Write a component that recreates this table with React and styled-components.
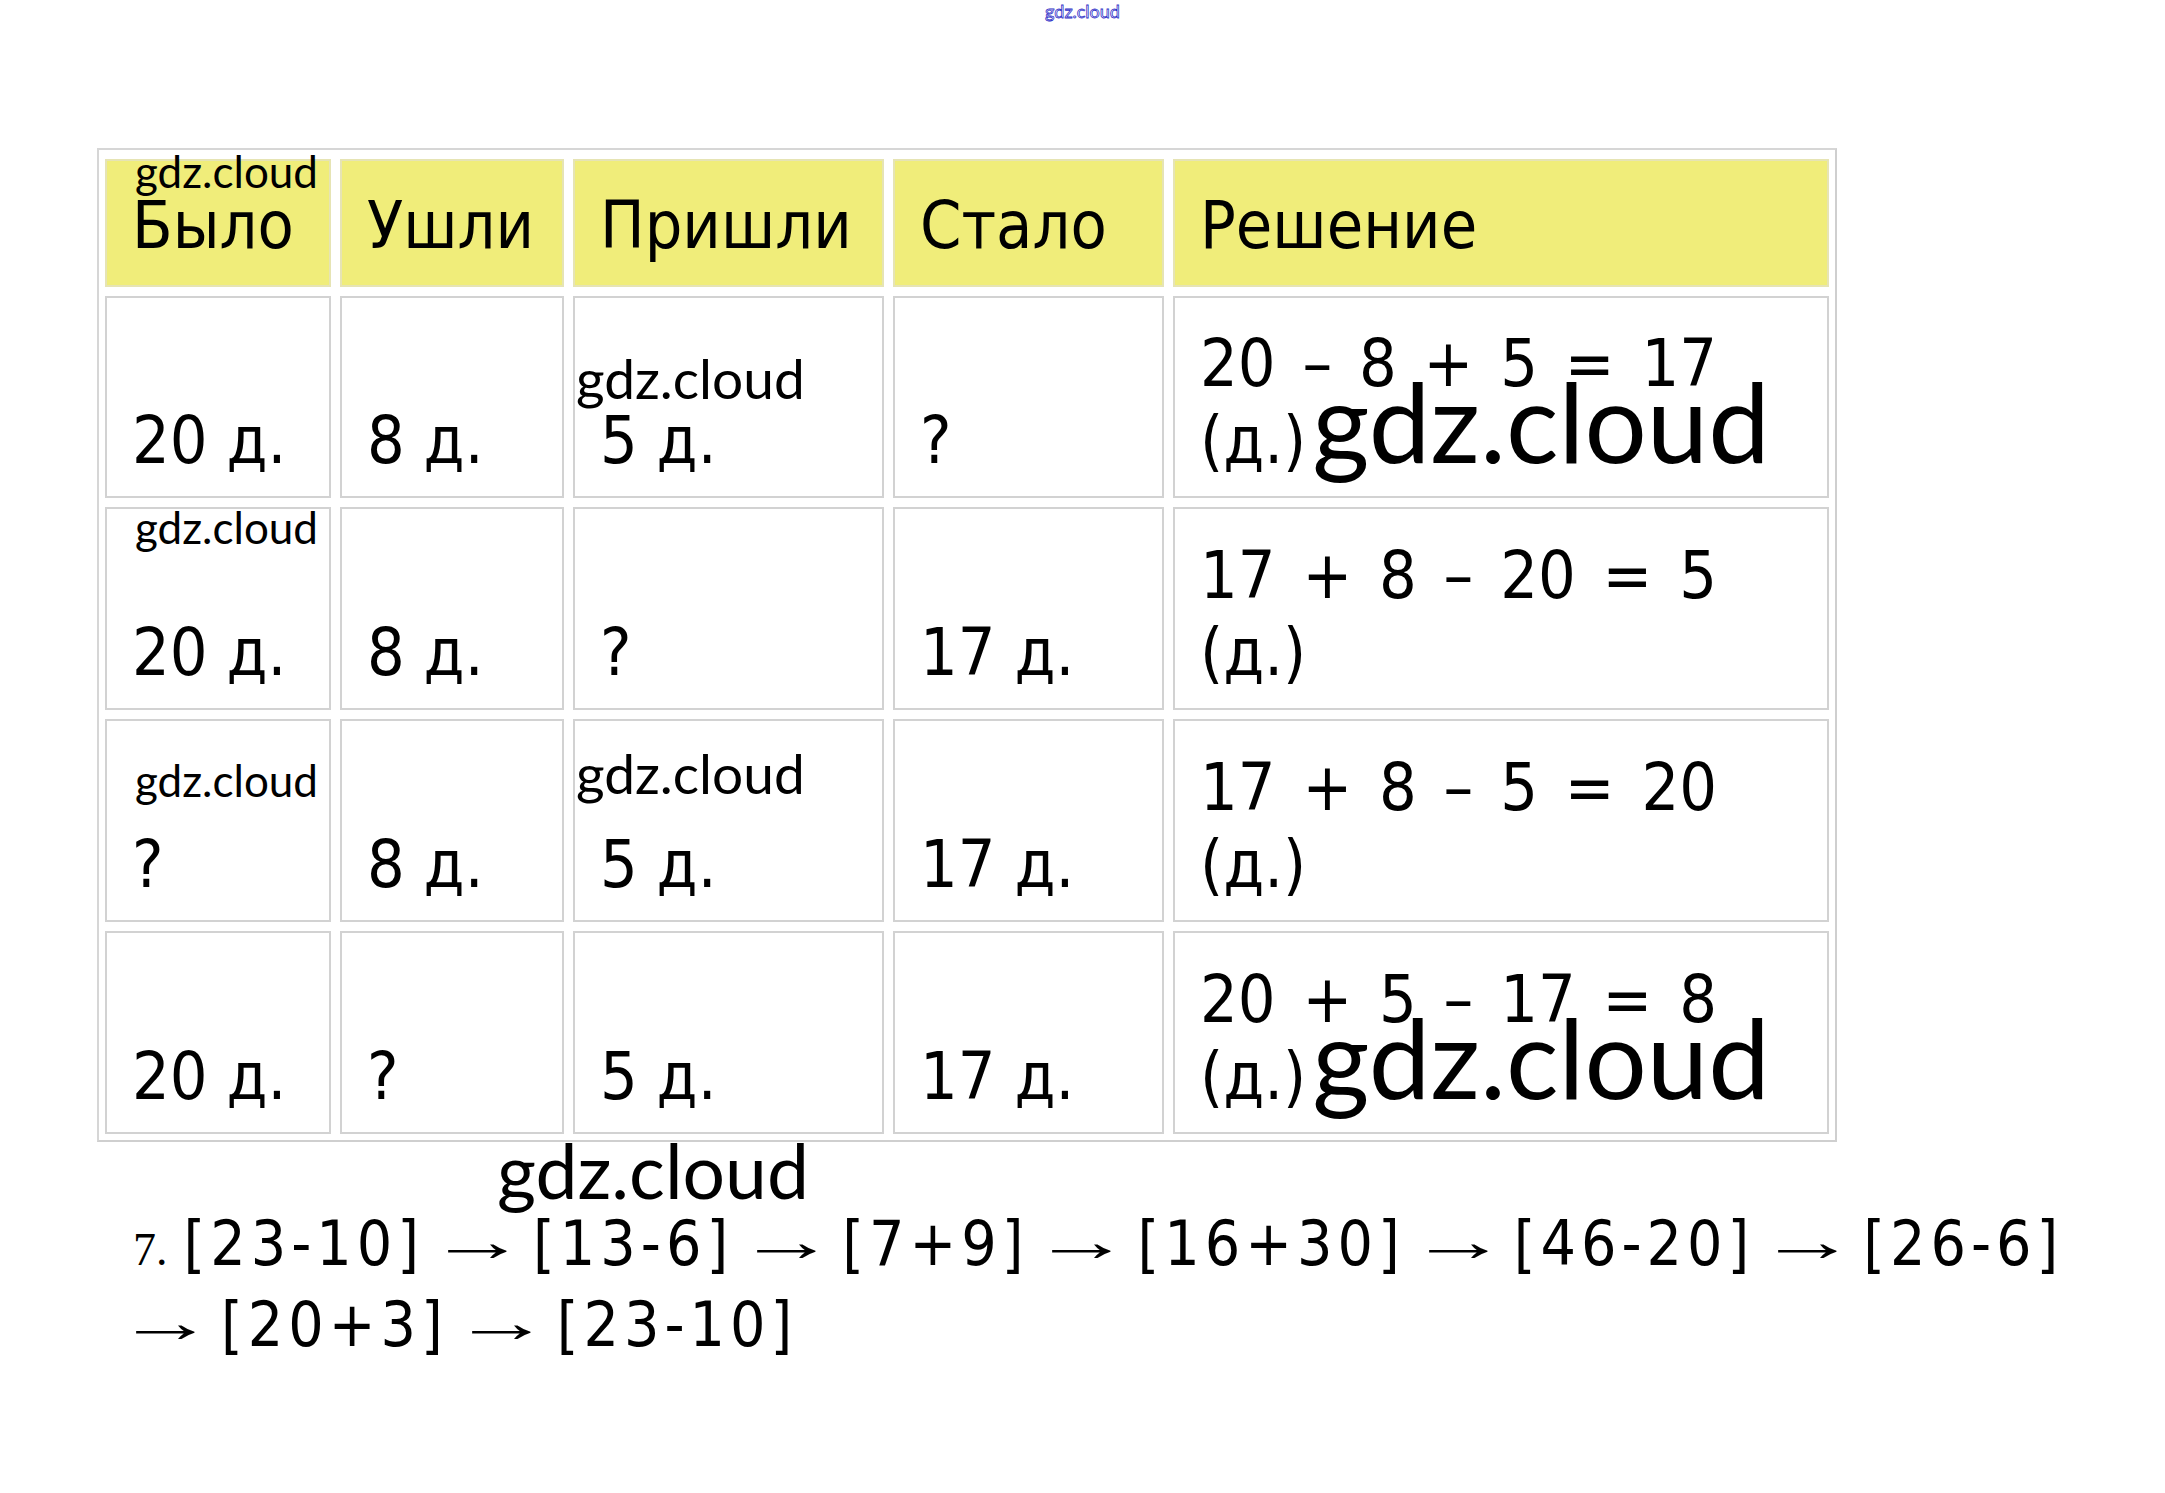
import React from "react";
import styled, { createGlobalStyle } from "styled-components";

const GlobalStyle = createGlobalStyle`
  html, body {
    margin: 0;
    padding: 0;
    background: #ffffff;
  }
  body {
    font-family: "DejaVu Sans Condensed", "DejaVu Sans", sans-serif;
    color: #000;
  }
`;

const headers = ["Было", "Ушли", "Пришли", "Стало", "Решение"];

// mark: small watermark placed over a cell { size, top, left }
const rows = [
  {
    cells: [
      { text: "20 д." },
      { text: "8 д." },
      { text: "5 д.", mark: { size: 55, top: 53, left: 1 } },
      { text: "?" },
    ],
    formula: "20 – 8 + 5 = 17",
    bigMark: true,
  },
  {
    cells: [
      { text: "20 д.", mark: { size: 44, top: -4, left: 28 } },
      { text: "8 д." },
      { text: "?" },
      { text: "17 д." },
    ],
    formula: "17 + 8 – 20 = 5",
  },
  {
    cells: [
      { text: "?", mark: { size: 44, top: 37, left: 28 } },
      { text: "8 д." },
      { text: "5 д.", mark: { size: 55, top: 25, left: 1 } },
      { text: "17 д." },
    ],
    formula: "17 + 8 – 5 = 20",
  },
  {
    cells: [
      { text: "20 д." },
      { text: "?" },
      { text: "5 д." },
      { text: "17 д." },
    ],
    formula: "20 + 5 – 17 = 8",
    bigMark: true,
  },
];

const chain = ["[23-10]", "[13-6]", "[7+9]", "[16+30]", "[46-20]", "[26-6]"];
const chainTail = ["[20+3]", "[23-10]"];

export default function App() {
  return (
    <>
      <GlobalStyle />
      <Page>
        <TopMark>gdz.cloud</TopMark>
        <Table>
          {headers.map((h, i) => (
            <Cell key={h} $head>
              {i === 0 && <Mark $size={44} $top={-12} $left={28}>gdz.cloud</Mark>}
              <CellText>{h}</CellText>
            </Cell>
          ))}
          {rows.map((row, r) => (
            <React.Fragment key={r}>
              {row.cells.map((c, i) => (
                <Cell key={i}>
                  {c.mark && (
                    <Mark $size={c.mark.size} $top={c.mark.top} $left={c.mark.left}>
                      gdz.cloud
                    </Mark>
                  )}
                  <CellText>{c.text}</CellText>
                </Cell>
              ))}
              <Cell>
                <CellText>
                  <Formula>{row.formula}</Formula>
                  <br />
                  (д.)
                  {row.bigMark && <BigMark>gdz.cloud</BigMark>}
                </CellText>
              </Cell>
            </React.Fragment>
          ))}
        </Table>
        <Answer>
          <Mark $size={75} $top={-73} $left={364}>gdz.cloud</Mark>
          <Num>7.</Num>
          {chain.map((t, i) => (
            <React.Fragment key={i}>
              {i > 0 && <Arrow>→</Arrow>}
              <Term>{t}</Term>
            </React.Fragment>
          ))}
          <br />
          {chainTail.map((t, i) => (
            <React.Fragment key={i}>
              <Arrow $first={i === 0}>→</Arrow>
              <Term>{t}</Term>
            </React.Fragment>
          ))}
        </Answer>
      </Page>
    </>
  );
}

const Page = styled.div`
  width: 2165px;
  min-height: 1493px;
  padding: 0 0 0 97px;
  box-sizing: border-box;
`;

const TopMark = styled.div`
  margin-left: -97px;
  text-align: center;
  font-family: Lato, "Open Sans", sans-serif;
  font-size: 18px;
  line-height: 22px;
  color: #ffffff;
  -webkit-text-stroke: 0.8px #3030c8;
`;

const Table = styled.div`
  margin-top: 126px;
  display: grid;
  grid-template-columns: 226px 224px 311px 271px 656px;
  grid-template-rows: 128px 202px 203px 203px 203px;
  column-gap: 9px;
  row-gap: 9px;
  width: max-content;
  padding: 9px 6px 6px 6px;
  border: 2px solid #d6d6d6;
  border-right-color: #cfcfcf;
  border-bottom-color: #cfcfcf;
`;

const Cell = styled.div`
  position: relative;
  display: flex;
  flex-direction: column;
  justify-content: flex-end;
  box-sizing: border-box;
  padding: 0 12px ${(p) => (p.$head ? "21px" : "17px")} 25px;
  background: ${(p) => (p.$head ? "#f0ed7a" : "#ffffff")};
  border: 2px solid ${(p) => (p.$head ? "#e6e4b4" : "#d2d2d2")};
`;

const CellText = styled.div`
  font-family: "DejaVu Sans Condensed", "DejaVu Sans", sans-serif;
  font-size: 66px;
  line-height: 77px;
  white-space: nowrap;
`;

const Formula = styled.span`
  word-spacing: 8px;
`;

const Mark = styled.span`
  position: absolute;
  top: ${(p) => p.$top}px;
  left: ${(p) => p.$left}px;
  font-family: Lato, "Open Sans", sans-serif;
  font-size: ${(p) => p.$size}px;
  line-height: 1;
  letter-spacing: 0;
  word-spacing: 0;
  color: #000;
  white-space: nowrap;
`;

const BigMark = styled.span`
  margin-left: 6px;
  font-family: Lato, "Open Sans", sans-serif;
  font-size: 110px;
  line-height: 0;
`;

const Answer = styled.div`
  position: relative;
  margin: 64px 0 0 36px;
  font-family: "DejaVu Sans Condensed", "DejaVu Sans", sans-serif;
  font-size: 62px;
  line-height: 75px;
  white-space: nowrap;
`;

const Term = styled.span`
  letter-spacing: 5px;
`;

const Num = styled.span`
  margin-right: 16px;
  font-family: "Liberation Serif", serif;
  font-size: 46px;
`;

/* thin serif arrow stretched sideways; the right margin makes room for the stretch */
const Arrow = styled.span`
  display: inline-block;
  margin: 0 47px 0 ${(p) => (p.$first ? "-17px" : "4px")};
  font-family: "Liberation Serif", serif;
  font-size: 58px;
  line-height: 0;
  vertical-align: 4px;
  transform: scaleX(1.7);
  transform-origin: left center;
`;
